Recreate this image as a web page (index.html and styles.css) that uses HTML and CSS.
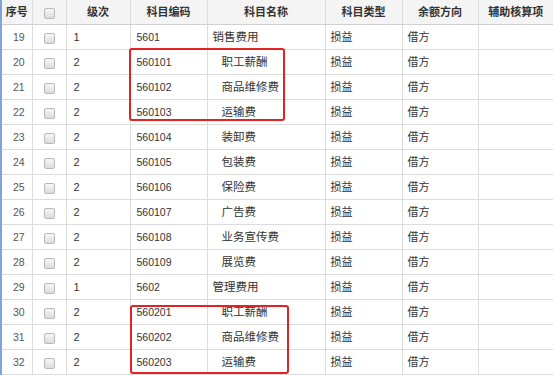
FILE: index.html
```html
<!DOCTYPE html>
<html lang="zh-CN">
<head>
<meta charset="utf-8">
<title>科目列表</title>
<link rel="stylesheet" href="styles.css">
</head>
<body>
<div class="grid-wrap">
  <table class="grid">
    <colgroup>
      <col class="c-no"><col class="c-ck"><col class="c-lv"><col class="c-code"><col class="c-name"><col class="c-type"><col class="c-dir"><col class="c-aux">
    </colgroup>
    <thead>
      <tr>
        <th class="th-no">序号</th>
        <th><span class="ck"></span></th>
        <th>级次</th>
        <th>科目编码</th>
        <th>科目名称</th>
        <th>科目类型</th>
        <th>余额方向</th>
        <th>辅助核算项</th>
      </tr>
    </thead>
    <tbody>
      <tr><td class="no">19</td><td class="cc"><span class="ck"></span></td><td class="lv">1</td><td class="code">5601</td><td class="name">销售费用</td><td>损益</td><td>借方</td><td></td></tr>
      <tr><td class="no">20</td><td class="cc"><span class="ck"></span></td><td class="lv">2</td><td class="code">560101</td><td class="name sub">职工薪酬</td><td>损益</td><td>借方</td><td></td></tr>
      <tr><td class="no">21</td><td class="cc"><span class="ck"></span></td><td class="lv">2</td><td class="code">560102</td><td class="name sub">商品维修费</td><td>损益</td><td>借方</td><td></td></tr>
      <tr><td class="no">22</td><td class="cc"><span class="ck"></span></td><td class="lv">2</td><td class="code">560103</td><td class="name sub">运输费</td><td>损益</td><td>借方</td><td></td></tr>
      <tr><td class="no">23</td><td class="cc"><span class="ck"></span></td><td class="lv">2</td><td class="code">560104</td><td class="name sub">装卸费</td><td>损益</td><td>借方</td><td></td></tr>
      <tr><td class="no">24</td><td class="cc"><span class="ck"></span></td><td class="lv">2</td><td class="code">560105</td><td class="name sub">包装费</td><td>损益</td><td>借方</td><td></td></tr>
      <tr><td class="no">25</td><td class="cc"><span class="ck"></span></td><td class="lv">2</td><td class="code">560106</td><td class="name sub">保险费</td><td>损益</td><td>借方</td><td></td></tr>
      <tr><td class="no">26</td><td class="cc"><span class="ck"></span></td><td class="lv">2</td><td class="code">560107</td><td class="name sub">广告费</td><td>损益</td><td>借方</td><td></td></tr>
      <tr><td class="no">27</td><td class="cc"><span class="ck"></span></td><td class="lv">2</td><td class="code">560108</td><td class="name sub">业务宣传费</td><td>损益</td><td>借方</td><td></td></tr>
      <tr><td class="no">28</td><td class="cc"><span class="ck"></span></td><td class="lv">2</td><td class="code">560109</td><td class="name sub">展览费</td><td>损益</td><td>借方</td><td></td></tr>
      <tr><td class="no">29</td><td class="cc"><span class="ck"></span></td><td class="lv">1</td><td class="code">5602</td><td class="name">管理费用</td><td>损益</td><td>借方</td><td></td></tr>
      <tr><td class="no">30</td><td class="cc"><span class="ck"></span></td><td class="lv">2</td><td class="code">560201</td><td class="name sub">职工薪酬</td><td>损益</td><td>借方</td><td></td></tr>
      <tr><td class="no">31</td><td class="cc"><span class="ck"></span></td><td class="lv">2</td><td class="code">560202</td><td class="name sub">商品维修费</td><td>损益</td><td>借方</td><td></td></tr>
      <tr><td class="no">32</td><td class="cc"><span class="ck"></span></td><td class="lv">2</td><td class="code">560203</td><td class="name sub">运输费</td><td>损益</td><td>借方</td><td></td></tr>
    </tbody>
  </table>
  <div class="mark mark-1"></div>
  <div class="mark mark-2"></div>
</div>
</body>
</html>
```
FILE: styles.css
```css
html, body {
  margin: 0;
  padding: 0;
  background: #ffffff;
  overflow: hidden;
}
body {
  font-family: "Liberation Sans", "Noto Sans CJK SC", sans-serif;
  font-size: 11px;
  color: #333333;
}
.grid-wrap {
  position: relative;
  width: 551px;
  border-left: 2px solid #7fa5d8;
}
.grid {
  width: 551px;
  table-layout: fixed;
  border-collapse: collapse;
}
.c-no { width: 30px; }
.c-ck { width: 34px; }
.c-lv { width: 64px; }
.c-code { width: 77px; }
.c-name { width: 118px; }
.c-type { width: 77px; }
.c-dir { width: 76px; }
.c-aux { width: 75px; }

.grid th,
.grid td {
  height: 24px;
  padding: 0 5px;
  line-height: 14px;
  border: 1px solid #dcdcdc;
  border-top: none;
  white-space: nowrap;
  overflow: hidden;
  vertical-align: middle;
}
.grid th {
  background: #f4f4f4;
  font-weight: bold;
  text-align: center;
  color: #333333;
  border-bottom-color: #d0d0d0;
}
.grid th.th-no {
  padding: 0 1px;
}
.grid td {
  text-align: left;
}
.grid td.no {
  text-align: center;
  padding: 0 0 0 4px;
  color: #555555;
  font-size: 10.5px;
}
.grid td.cc {
  text-align: center;
  padding: 0;
}
.grid td.lv {
  padding-left: 7px;
}
.grid td.code {
  padding-left: 6px;
  font-size: 10.5px;
}
.grid td.name {
  padding-left: 5px;
  font-size: 11.5px;
}
.grid td.name.sub {
  padding-left: 14px;
}
.grid tr > :first-child {
  border-left: none;
}
.grid tr > :last-child {
  border-right: none;
}
.ck {
  display: inline-block;
  width: 9px;
  height: 9px;
  border: 1px solid #b9b9b9;
  border-radius: 2px;
  background: linear-gradient(#f6f6f6, #dcdcdc);
  vertical-align: middle;
}
.mark {
  position: absolute;
  border: 2px solid #e32222;
  border-radius: 3px;
  box-sizing: border-box;
  pointer-events: none;
}
.mark-1 {
  left: 127px;
  top: 48px;
  width: 156px;
  height: 73px;
}
.mark-2 {
  left: 128px;
  top: 305px;
  width: 159px;
  height: 69px;
}
```
